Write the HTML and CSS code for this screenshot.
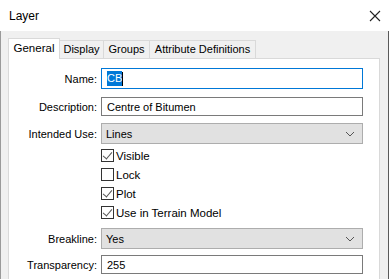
FILE: index.html
```html
<!DOCTYPE html>
<html lang="en">
<head>
  <meta charset="UTF-8">
  <meta name="viewport" content="width=device-width, initial-scale=1.0">
  <link rel="stylesheet" href="styles.css">
</head>
<body>
  <div class="window">
    <div class="title-bar">
      <span class="title-text">Layer</span>
      <svg class="close-icon" width="12" height="12" viewBox="0 0 12 12">
        <path d="M1 1 L11 11 M11 1 L1 11" stroke="#222" stroke-width="1.1" fill="none"/>
      </svg>
    </div>

    <div class="dialog-body">
      <div class="tab-row">
        <div class="tab active">General</div>
        <div class="tab tab-display">Display</div>
        <div class="tab tab-groups">Groups</div>
        <div class="tab tab-attrs">Attribute Definitions</div>
      </div>

      <div class="tab-panel">
        <div class="form-row row-name">
          <label class="field-label">Name:</label>
          <div class="text-input focused"><span class="selected-text">CB</span><span class="caret"></span></div>
        </div>

        <div class="form-row row-desc">
          <label class="field-label">Description:</label>
          <div class="text-input short">Centre of Bitumen</div>
        </div>

        <div class="form-row row-use">
          <label class="field-label">Intended Use:</label>
          <div class="combo">
            <span>Lines</span>
            <svg class="chevron" width="10" height="6" viewBox="0 0 10 6"><path d="M1 1 L5 5 L9 1" stroke="#555" fill="none"/></svg>
          </div>
        </div>

        <div class="form-row row-checks">
          <span class="field-label"></span>
          <div class="check-list">
            <div class="check-item"><span class="check-box checked"></span>Visible</div>
            <div class="check-item"><span class="check-box"></span>Lock</div>
            <div class="check-item"><span class="check-box checked"></span>Plot</div>
            <div class="check-item"><span class="check-box checked"></span>Use in Terrain Model</div>
          </div>
        </div>

        <div class="form-row row-brk">
          <label class="field-label">Breakline:</label>
          <div class="combo">
            <span>Yes</span>
            <svg class="chevron" width="10" height="6" viewBox="0 0 10 6"><path d="M1 1 L5 5 L9 1" stroke="#555" fill="none"/></svg>
          </div>
        </div>

        <div class="form-row row-trans">
          <label class="field-label">Transparency:</label>
          <div class="text-input short">255</div>
        </div>
      </div>
    </div>
  </div>
</body>
</html>
```

FILE: styles.css
```css
body {
  margin: 0;
  background-color: #fff;
  font-family: "Liberation Sans", Arial, sans-serif;
  font-size: 11px;
  color: #000;
}

.window {
  width: 390px;
  height: 279px;
  display: flex;
  flex-direction: column;
  overflow: hidden;
}

.title-bar {
  height: 31px;
  flex-shrink: 0;
  display: flex;
  align-items: center;
  justify-content: space-between;
  padding: 0 9px 0 9px;
  background-color: #fff;
  box-sizing: border-box;
}

.title-text {
  font-size: 12px;
}

.dialog-body {
  flex: 1;
  background-color: #f0f0f0;
  border-left: 1px solid #9a9a9a;
  border-right: 1px solid #5a5a5a;
  margin-right: 1px;
  padding: 7px 8px 0 7px;
  display: flex;
  flex-direction: column;
}

.tab-row {
  display: flex;
  align-items: flex-end;
  height: 20px;
  position: relative;
  z-index: 1;
}

.tab {
  height: 18px;
  line-height: 17px;
  text-align: center;
  border: 1px solid #d9d9d9;
  border-bottom: none;
  border-left: none;
  background-color: #f0f0f0;
  box-sizing: border-box;
}

.tab.active {
  height: 21px;
  line-height: 19px;
  border-left: 1px solid #d9d9d9;
  background-color: #fff;
  margin-bottom: -1px;
  width: 52px;
  font-size: 11.5px;
}

.tab-display {
  width: 44px;
}

.tab-groups {
  width: 46px;
}

.tab-attrs {
  width: 106px;
}

.tab-panel {
  flex: 1;
  background-color: #fff;
  border: 1px solid #d9d9d9;
  border-bottom: none;
  padding: 9px 16px 0 0;
}

.form-row {
  display: flex;
  align-items: center;
  gap: 4px;
}

.field-label {
  width: 88px;
  flex-shrink: 0;
  text-align: right;
  white-space: nowrap;
}

.text-input {
  flex: 1;
  height: 21px;
  box-sizing: border-box;
  border: 1px solid #7a7a7a;
  padding: 0 5px;
  display: flex;
  align-items: center;
}

.text-input.short {
  height: 19px;
}

.text-input.focused {
  border-color: #0078d7;
}

.selected-text {
  background-color: #0078d7;
  color: #fff;
  line-height: 15px;
}

.caret {
  width: 1px;
  height: 14px;
  background-color: #000;
}

.combo {
  flex: 1;
  height: 21px;
  box-sizing: border-box;
  border: 1px solid #adadad;
  background-color: #e1e1e1;
  padding: 0 7px 0 4px;
  display: flex;
  align-items: center;
  justify-content: space-between;
}

.row-desc {
  margin-top: 8px;
}

.row-use {
  margin-top: 7px;
}

.row-checks {
  margin-top: 5px;
}

.check-list {
  display: flex;
  flex-direction: column;
  gap: 6px;
}

.check-item {
  display: flex;
  align-items: center;
  height: 13px;
  font-size: 11.5px;
}

.check-box {
  width: 13px;
  height: 13px;
  box-sizing: border-box;
  border: 1px solid #333;
  background-color: #fff;
  margin-right: 2px;
  position: relative;
}

.check-box.checked::after {
  content: '';
  position: absolute;
  left: 3px;
  top: 0px;
  width: 4px;
  height: 8px;
  border-right: 1px solid #555;
  border-bottom: 1px solid #555;
  transform: rotate(40deg);
}

.row-brk {
  margin-top: 9px;
}

.row-trans {
  margin-top: 6px;
}
```
